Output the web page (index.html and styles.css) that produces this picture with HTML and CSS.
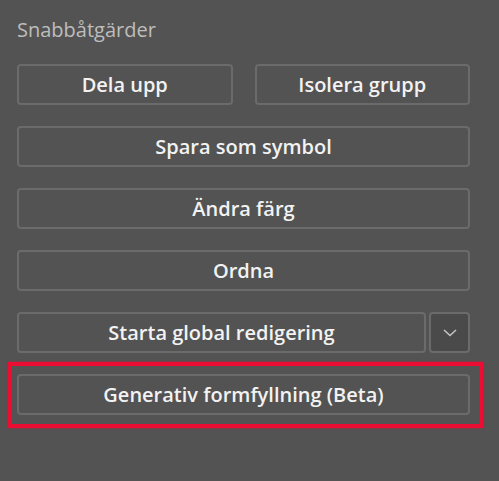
FILE: index.html
```html
<!DOCTYPE html>
<html lang="sv">
<head>
    <meta charset="UTF-8">
    <meta name="viewport" content="width=device-width, initial-scale=1.0">
    <title>Snabbåtgärder</title>
    <link rel="stylesheet" href="styles.css">
</head>
<body>
    <section class="panel">
        <h2 class="panel-title">Snabbåtgärder</h2>
        <div class="actions">
            <div class="row row-split">
                <button class="action">Dela upp</button>
                <button class="action">Isolera grupp</button>
            </div>
            <button class="action">Spara som symbol</button>
            <button class="action">Ändra färg</button>
            <button class="action">Ordna</button>
            <div class="row row-menu">
                <button class="action">Starta global redigering</button>
                <button class="action more" aria-label="Fler alternativ">
                    <svg width="14" height="8" viewBox="0 0 14 8">
                        <path d="M1 1 L7 6.5 L13 1" fill="none" stroke="#c4c4c4" stroke-width="1.6"/>
                    </svg>
                </button>
            </div>
            <div class="highlight">
                <button class="action">Generativ formfyllning (Beta)</button>
            </div>
        </div>
    </section>
</body>
</html>
```

FILE: styles.css
```css
body {
    margin: 0;
    padding: 0;
    background-color: #535353;
    font-family: "Open Sans", "DejaVu Sans", sans-serif;
}

.panel {
    width: 453px;
    min-height: 465px;
    padding: 16px 0 0 17px;
}

.panel-title {
    margin: 0;
    font-size: 20px;
    font-weight: 400;
    line-height: 27px;
    color: #bdbdbd;
}

.actions {
    display: flex;
    flex-direction: column;
    gap: 21px;
    margin-top: 21px;
}

.row {
    display: flex;
}

.row-split {
    gap: 22px;
}

.row-split .action {
    flex: 1;
}

.row-menu {
    gap: 3px;
}

.row-menu .action:first-child {
    flex: 1;
}

.action {
    display: block;
    height: 41px;
    width: 100%;
    padding: 0;
    background-color: #535353;
    border: 2px solid #6b6b6b;
    border-radius: 4px;
    color: #f2f2f2;
    font-family: inherit;
    font-size: 20px;
    font-weight: 600;
    cursor: pointer;
}

.action.more {
    width: 41px;
    flex: none;
    background-color: #4a4a4a;
    display: flex;
    align-items: center;
    justify-content: center;
}

.highlight {
    position: relative;
}

.highlight::after {
    content: "";
    position: absolute;
    top: -12px;
    left: -9px;
    right: -13px;
    bottom: -13px;
    border: 4px solid #ec0d32;
    box-shadow: 0 0 2px rgba(236, 13, 50, 0.7);
    pointer-events: none;
}
```
